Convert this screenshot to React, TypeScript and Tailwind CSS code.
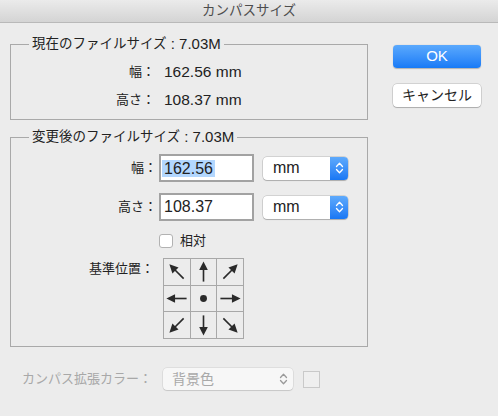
import React from "react";

const FONT = "font-['Liberation_Sans','Noto_Sans_CJK_JP',sans-serif]";

function Arrow({ angle }: { angle: number }) {
  return (
    <svg width="25" height="25" viewBox="0 0 26 26">
      <g transform={`rotate(${angle} 13 13)`}>
        <line x1="13" y1="23.5" x2="13" y2="9" stroke="#2a2a2a" strokeWidth="1.7" />
        <polygon points="13,2.5 8.5,11.5 17.5,11.5" fill="#2a2a2a" />
      </g>
    </svg>
  );
}

function Dot() {
  return (
    <svg width="25" height="25" viewBox="0 0 26 26">
      <circle cx="13" cy="13" r="3.6" fill="#2a2a2a" />
    </svg>
  );
}

function Chevrons({ color }: { color: string }) {
  return (
    <svg width="9" height="14" viewBox="0 0 9 14">
      <path d="M1.5 5.5 L4.5 2.3 L7.5 5.5" fill="none" stroke={color} strokeWidth="1.3" strokeLinecap="round" strokeLinejoin="round" />
      <path d="M1.5 8.5 L4.5 11.7 L7.5 8.5" fill="none" stroke={color} strokeWidth="1.3" strokeLinecap="round" strokeLinejoin="round" />
    </svg>
  );
}

function UnitSelect() {
  return (
    <div className="ml-[9px] flex h-[23px] w-[85px] rounded-[4px] bg-white shadow-[0_0_0_0.5px_rgba(0,0,0,0.22),0_1px_1px_rgba(0,0,0,0.18)]">
      <div className="flex flex-1 items-center pl-[10px] text-[16px] text-[#222]">mm</div>
      <div className="flex w-[18px] items-center justify-center rounded-r-[4px] bg-gradient-to-b from-[#5eaafc] to-[#1877f4]">
        <Chevrons color="#ffffff" />
      </div>
    </div>
  );
}

function Legend({ text }: { text: string }) {
  return (
    <legend className="ml-[18px] flex h-[16px] items-center px-[3px] text-[13.5px] leading-[16px]">
      <span>{text}</span>
      <span className="text-[15px] leading-[16px] whitespace-pre"> : 7.03M</span>
    </legend>
  );
}

export default function App() {
  const cells = [
    <Arrow angle={-45} />,
    <Arrow angle={0} />,
    <Arrow angle={45} />,
    <Arrow angle={-90} />,
    <Dot />,
    <Arrow angle={90} />,
    <Arrow angle={-135} />,
    <Arrow angle={180} />,
    <Arrow angle={135} />,
  ];

  return (
    <div className={`h-[416px] w-[498px] overflow-hidden bg-[#ececec] text-[#222] ${FONT}`}>
      {/* title bar */}
      <div className="flex h-[23px] items-center justify-center border-b border-[#b9b9b9] bg-gradient-to-b from-[#ebebeb] to-[#d4d4d4] text-[13.5px] text-[#4d4d4d]">
        カンパスサイズ
      </div>

      <div className="flex pl-[10px] pt-[13px]">
        {/* left column */}
        <div className="flex w-[358px] flex-col">
          {/* current size */}
          <fieldset className="border border-[#a9a9a9] pb-[5px] pt-[6px]">
            <Legend text="現在のファイルサイズ" />
            <div className="flex h-[28px] items-center">
              <div className="w-[144px] text-right text-[13px]">幅：</div>
              <div className="ml-[9px] text-[15.5px]">162.56 mm</div>
            </div>
            <div className="flex h-[28px] items-center">
              <div className="w-[144px] text-right text-[13px]">高さ：</div>
              <div className="ml-[9px] text-[15.5px]">108.37 mm</div>
            </div>
          </fieldset>

          {/* new size */}
          <fieldset className="mt-[9px] border border-[#a9a9a9] pb-[7px] pt-[9px]">
            <Legend text="変更後のファイルサイズ" />
            <div className="flex h-[28px] items-center">
              <div className="w-[146px] text-right text-[13px]">幅：</div>
              <div className="ml-[2px] flex h-[28px] w-[95px] items-center border-2 border-[#a2a2a2] bg-white pl-[1px] text-[16px]">
                <span className="bg-[#b3d7fe] px-[2px] leading-[17px]">162.56</span>
              </div>
              <UnitSelect />
            </div>
            <div className="mt-[11px] flex h-[28px] items-center">
              <div className="w-[146px] text-right text-[13px]">高さ：</div>
              <div className="ml-[2px] flex h-[28px] w-[95px] items-center border-2 border-[#a2a2a2] bg-white pl-[3px] text-[16px]">
                108.37
              </div>
              <UnitSelect />
            </div>
            <div className="mt-[10px] flex h-[20px] items-center pl-[148px]">
              <div className="h-[14px] w-[14px] rounded-[3px] border border-[#b2b2b2] bg-white" />
              <div className="ml-[7px] text-[13px]">相対</div>
            </div>
            <div className="mt-[7px] flex items-start">
              <div className="mt-[3px] w-[143px] text-right text-[13px] leading-[16px]">基準位置：</div>
              <div className="ml-[9px] grid h-[81px] w-[81px] grid-cols-3 gap-px border border-[#a8a8a8] bg-[#a8a8a8]">
                {cells.map((c, i) => (
                  <div key={i} className="flex items-center justify-center bg-[#ececec]">
                    {c}
                  </div>
                ))}
              </div>
            </div>
          </fieldset>

          {/* canvas extension color */}
          <div className="mt-[21px] flex h-[22px] items-center pl-[12px]">
            <div className="w-[141px] text-[13px] text-[#a8a8a8]">カンパス拡張カラー：</div>
            <div className="flex h-[22px] w-[130px] items-center justify-between rounded-[4px] bg-[#f7f7f7] pl-[9px] pr-[5px] text-[14px] text-[#a9a9a9] shadow-[0_0_0_0.5px_rgba(0,0,0,0.12),0_1px_1px_rgba(0,0,0,0.1)]">
              <span>背景色</span>
              <Chevrons color="#9a9a9a" />
            </div>
            <div className="ml-[10px] h-[17px] w-[17px] border border-[#c9c9c9] bg-[#efefef]" />
          </div>
        </div>

        {/* buttons */}
        <div className="ml-[25px] flex w-[88px] flex-col gap-[16px] pt-[9px]">
          <div className="flex h-[23px] items-center justify-center rounded-[4px] bg-gradient-to-b from-[#5aa9fd] to-[#167af6] text-[15px] text-white shadow-[0_0.5px_1px_rgba(0,0,0,0.25)]">
            OK
          </div>
          <div className="flex h-[23px] items-center justify-center rounded-[4px] bg-white text-[14px] text-[#222] shadow-[0_0_0_0.5px_rgba(0,0,0,0.22),0_1px_1px_rgba(0,0,0,0.18)]">
            キャンセル
          </div>
        </div>
      </div>
    </div>
  );
}
